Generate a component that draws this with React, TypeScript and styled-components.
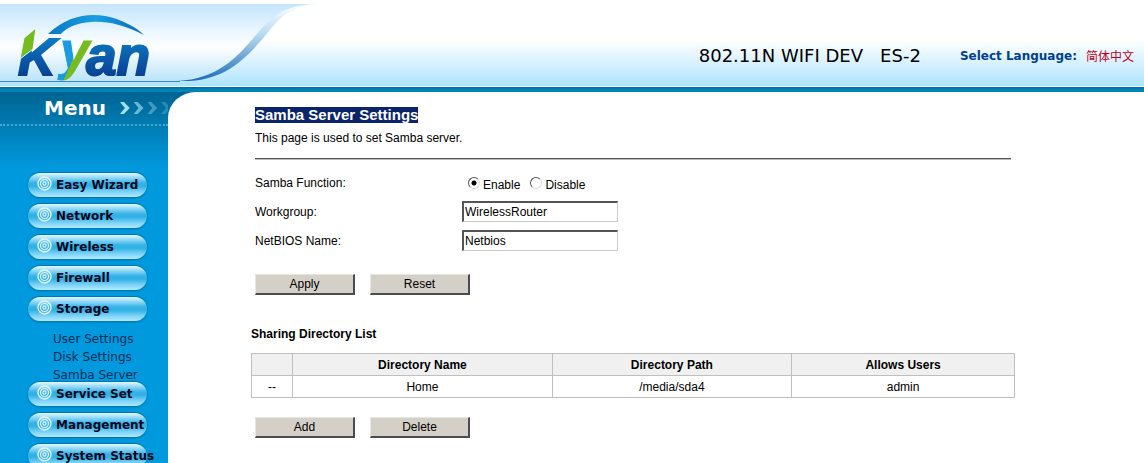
import React from "react";
import styled, { createGlobalStyle } from "styled-components";

const sans = `"Liberation Sans", Arial, sans-serif`;
const wide = `"DejaVu Sans", Verdana, sans-serif`;

const GlobalStyle = createGlobalStyle`
  *, *::before, *::after { box-sizing: border-box; }
  html, body, #root { height: 100%; }
  body { margin: 0; background: #fff; color: #000; font: 12px/16px ${sans}; overflow: hidden; }
`;

const Page = styled.div`
  display: flex;
  flex-direction: column;
  min-height: 100%;
`;

const Header = styled.header`
  display: flex;
  justify-content: space-between;
  height: 92px;
  background: linear-gradient(#fff 0 40px, #d4f0ff 65px, #ace4fe 86px, #fff 86px 87px, #006d9d 87px, #0085bb 90px, #0085bb 92px);
`;

const Brand = styled.svg`
  display: block;
  flex: none;
`;

const HeaderInfo = styled.div`
  display: flex;
  align-items: center;
  gap: 39px;
  height: 112px;
  padding-right: 10px;
  white-space: nowrap;
  font-family: ${wide};
`;

const Model = styled.span`
  font-size: 18px;
  white-space: pre;
`;

const Language = styled.span`
  display: flex;
  gap: 9px;
  font-size: 12px;
  font-weight: bold;
  color: #003f91;
`;

const LanguageLink = styled.a`
  font: 12px/16px "Noto Sans CJK SC", sans-serif;
  color: #c00020;
  text-decoration: none;
`;

const Body = styled.div`
  display: flex;
  flex: 1;
  background: linear-gradient(#006492, #0099dd 76px);
`;

const Sidebar = styled.aside`
  flex: none;
  width: 168px;
`;

const MenuTitle = styled.div`
  display: flex;
  align-items: center;
  gap: 13px;
  height: 34px;
  padding-left: 44px;
  overflow: hidden;
  border-bottom: 2px dotted #45a9d2;
  color: #fff;
  font: bold 20px/32px ${wide};
`;

const MenuList = styled.nav`
  display: flex;
  flex-direction: column;
  gap: 7px;
  padding: 47px 0 0 28px;
`;

const MenuItem = styled.a`
  display: flex;
  flex: none;
  gap: 4px;
  width: 119px;
  height: 24px;
  padding: 3px 0 0 9px;
  border-radius: 12px;
  background: linear-gradient(#e6faff, #8bd6f8 5px, #36b3e6 10px, #2fb0e4 13px, #7fd3f9 19px, #b2eaff);
  box-shadow: 0 1px 2px #006fa8, 0 -1px 1px #0077b0;
  color: #00061c;
  font: bold 12px/19px ${wide};
  text-decoration: none;
  white-space: nowrap;

  svg { flex: none; }
`;

const SubMenu = styled.div`
  display: flex;
  flex-direction: column;
  margin-bottom: -9px;
  padding: 2px 0 0 25px;
`;

const SubItem = styled.a`
  color: #002d55;
  font: 12px/18px ${wide};
  text-decoration: none;
`;

const Content = styled.main`
  flex: 1;
  min-width: 0;
  padding: 15px 129px 0 83px;
  border-top-left-radius: 28px 26px;
  background: #fff;
`;

const Section = styled.section`
  padding: 0 4px;
`;

const Title = styled.h1`
  width: fit-content;
  margin: 0;
  background: #0a246a;
  color: #fff;
  font: bold 15px/16px ${sans};
`;

const Intro = styled.p`
  margin: 7px 0 12px;
`;

const Rule = styled.hr`
  height: 2px;
  margin: 0 0 8px;
  border: 0;
  border-top: 1px solid #555;
  border-bottom: 1px solid #bbb;
`;

const Field = styled.div`
  display: grid;
  grid-template-columns: 207px 1fr;
  align-items: center;
  height: 29px;
`;

const TextBox = styled.input`
  width: 156px;
  height: 21px;
  padding: 0 1px;
  border: 2px solid;
  border-color: #555 #ccc #ccc #555;
  border-width: 2px 1px 1px 2px;
  background: #fff;
  color: #000;
  font: 12px/16px ${sans};
`;

const RadioGroup = styled.div`
  display: flex;
  gap: 10px;
  padding: 4px 0 0 6px;
`;

const RadioLabel = styled.label`
  display: flex;
  gap: 3px;
  line-height: 20px;
`;

const Radio = styled.input`
  appearance: none;
  width: 12px;
  height: 12px;
  margin: 2px 0 0;
  border: 1px solid;
  border-color: #555 #ddd #ddd #555;
  border-radius: 50%;
  background: #fff;
  &:checked { background: radial-gradient(circle, #000 0 2px, #fff 3px); }
`;

const Buttons = styled.div`
  display: flex;
  gap: 15px;
  padding-top: 19px;
`;

const Button = styled.button`
  width: 100px;
  height: 21px;
  padding: 0;
  border: solid;
  border-width: 1px 2px 2px 1px;
  border-color: #e8e6e0 #4b4b50 #4b4b50 #e8e6e0;
  background: #d4d0c8;
  color: #000;
  font: 12px/16px ${sans};
`;

const ListTitle = styled.h2`
  margin: 31px 0 11px;
  font: bold 12px/16px ${sans};
`;

const Table = styled.table`
  width: 100%;
  table-layout: fixed;
  border-collapse: collapse;
  text-align: center;
`;

const Column = styled.col<{ $share?: string }>`
  width: ${({ $share }) => $share ?? "auto"};
`;

const Cell = styled.td`
  height: 22px;
  padding: 0;
  border: 1px solid #bfbfbf;
`;

const HeadCell = styled(Cell)`
  background: #f0f0f0;
  font-weight: bold;
`;

function Logo() {
  return (
    <Brand width="330" height="87" viewBox="0 0 330 87" role="img" aria-label="Kyan">
      <defs>
        <linearGradient id="sky" x1="0" y1="4" x2="0" y2="82" gradientUnits="userSpaceOnUse">
          <stop offset="0" stopColor="#c4e5fd" />
          <stop offset=".55" stopColor="#fff" />
          <stop offset="1" stopColor="#b9e3fb" />
        </linearGradient>
        <linearGradient id="ribbon" x1="0" y1="4" x2="0" y2="82" gradientUnits="userSpaceOnUse">
          <stop offset="0" stopColor="#fff" />
          <stop offset=".4" stopColor="#b6d9f2" />
          <stop offset="1" stopColor="#1a6cb5" />
        </linearGradient>
        <linearGradient id="navy" x1="0" y1="38" x2="0" y2="77" gradientUnits="userSpaceOnUse">
          <stop offset="0" stopColor="#0b7ac4" />
          <stop offset="1" stopColor="#0a3f92" />
        </linearGradient>
        <linearGradient id="arc">
          <stop offset="0" stopColor="#0a77c5" />
          <stop offset=".5" stopColor="#17a0e2" />
          <stop offset="1" stopColor="#0a68b5" />
        </linearGradient>
        <linearGradient id="split" x1="64" y1="55" x2="82" y2="63" gradientUnits="userSpaceOnUse">
          <stop offset=".5" stopColor="#1b9ae0" />
          <stop offset=".5" stopColor="#76bc21" />
        </linearGradient>
      </defs>
      <path d="M0 4H316C287 6 276 17 263 33C241 61 222 81 180 81H0Z" fill="url(#sky)" />
      <path d="M0 81.5H180" stroke="#3f87c0" />
      <path d="M316 4C287 5 275 14 261 29C239 56 219 79 178 81C224 83 246 59 269 31C281 16 291 7 316 4Z" fill="url(#ribbon)" />
      <path d="M48 34C66 17 86 13 105 16C121 19 136 27 144 35C122 24 106 21 91 22C77 23 67 27 61 34Z" fill="url(#arc)" />
      <g fontFamily="Liberation Sans, sans-serif" fontWeight="bold" fontStyle="italic">
        <text x="18" y="75" fontSize="52" fill="url(#navy)" stroke="url(#navy)" strokeWidth="2">K</text>
        <text x="60" y="69" fontSize="53" fill="url(#split)" stroke="url(#split)" strokeWidth="1">y</text>
        <text x="86" y="75" fontSize="55" fill="url(#navy)" stroke="url(#navy)" strokeWidth="2">an</text>
      </g>
      <path d="M24 38L36 28L33 49L20 59Z" fill="#76bc21" stroke="#eef8ff" strokeWidth="1" />
    </Brand>
  );
}

function Chevrons() {
  return (
    <svg width="50" height="16" viewBox="0 0 50 16" fill="#a4def3" aria-hidden="true">
      {[1, 0.65, 0.4, 0.25].map((opacity, i) => (
        <path key={i} d="M1 2H5L11 8L5 14H1L6 8Z" transform={`translate(${i * 14} 0)`} opacity={opacity} />
      ))}
    </svg>
  );
}

function Target() {
  return (
    <svg width="15" height="15" viewBox="0 0 15 15" fill="none" stroke="#e4f8ff" aria-hidden="true">
      <circle cx="7.5" cy="7.5" r="6.5" strokeWidth="1.4" />
      <circle cx="7.5" cy="7.5" r="4" strokeWidth="1.2" />
      <circle cx="7.5" cy="7.5" r="1.6" strokeWidth="1.2" />
    </svg>
  );
}

const menu: { label: string; children?: string[] }[] = [
  { label: "Easy Wizard" },
  { label: "Network" },
  { label: "Wireless" },
  { label: "Firewall" },
  { label: "Storage", children: ["User Settings", "Disk Settings", "Samba Server"] },
  { label: "Service Set" },
  { label: "Management" },
  { label: "System Status" },
];

export default function App() {
  return (
    <Page>
      <GlobalStyle />
      <Header>
        <Logo />
        <HeaderInfo>
          <Model>{"802.11N WIFI DEV   ES-2"}</Model>
          <Language>
            Select Language:
            <LanguageLink href="#zh" lang="zh-CN">简体中文</LanguageLink>
          </Language>
        </HeaderInfo>
      </Header>
      <Body>
        <Sidebar>
          <MenuTitle>Menu<Chevrons /></MenuTitle>
          <MenuList>
            {menu.map((item) => (
              <React.Fragment key={item.label}>
                <MenuItem href="#"><Target />{item.label}</MenuItem>
                {item.children && (
                  <SubMenu>
                    {item.children.map((child) => <SubItem key={child} href="#">{child}</SubItem>)}
                  </SubMenu>
                )}
              </React.Fragment>
            ))}
          </MenuList>
        </Sidebar>
        <Content>
          <Section>
            <Title>Samba Server Settings</Title>
            <Intro>This page is used to set Samba server.</Intro>
            <Rule />
            <Field>
              <span id="samba-function">Samba Function:</span>
              <RadioGroup role="radiogroup" aria-labelledby="samba-function">
                <RadioLabel><Radio type="radio" name="samba" defaultChecked />Enable</RadioLabel>
                <RadioLabel><Radio type="radio" name="samba" />Disable</RadioLabel>
              </RadioGroup>
            </Field>
            <Field>
              <label htmlFor="workgroup">Workgroup:</label>
              <TextBox id="workgroup" defaultValue="WirelessRouter" />
            </Field>
            <Field>
              <label htmlFor="netbios">NetBIOS Name:</label>
              <TextBox id="netbios" defaultValue="Netbios" />
            </Field>
            <Buttons>
              <Button type="button">Apply</Button>
              <Button type="button">Reset</Button>
            </Buttons>
          </Section>
          <ListTitle>Sharing Directory List</ListTitle>
          <Table>
            <colgroup>
              <Column $share="5.4%" />
              <Column $share="34%" />
              <Column $share="31.4%" />
              <Column />
            </colgroup>
            <thead>
              <tr>
                <HeadCell as="th" />
                <HeadCell as="th" scope="col">Directory Name</HeadCell>
                <HeadCell as="th" scope="col">Directory Path</HeadCell>
                <HeadCell as="th" scope="col">Allows Users</HeadCell>
              </tr>
            </thead>
            <tbody>
              <tr>
                <Cell>--</Cell>
                <Cell>Home</Cell>
                <Cell>/media/sda4</Cell>
                <Cell>admin</Cell>
              </tr>
            </tbody>
          </Table>
          <Section>
            <Buttons>
              <Button type="button">Add</Button>
              <Button type="button">Delete</Button>
            </Buttons>
          </Section>
        </Content>
      </Body>
    </Page>
  );
}
